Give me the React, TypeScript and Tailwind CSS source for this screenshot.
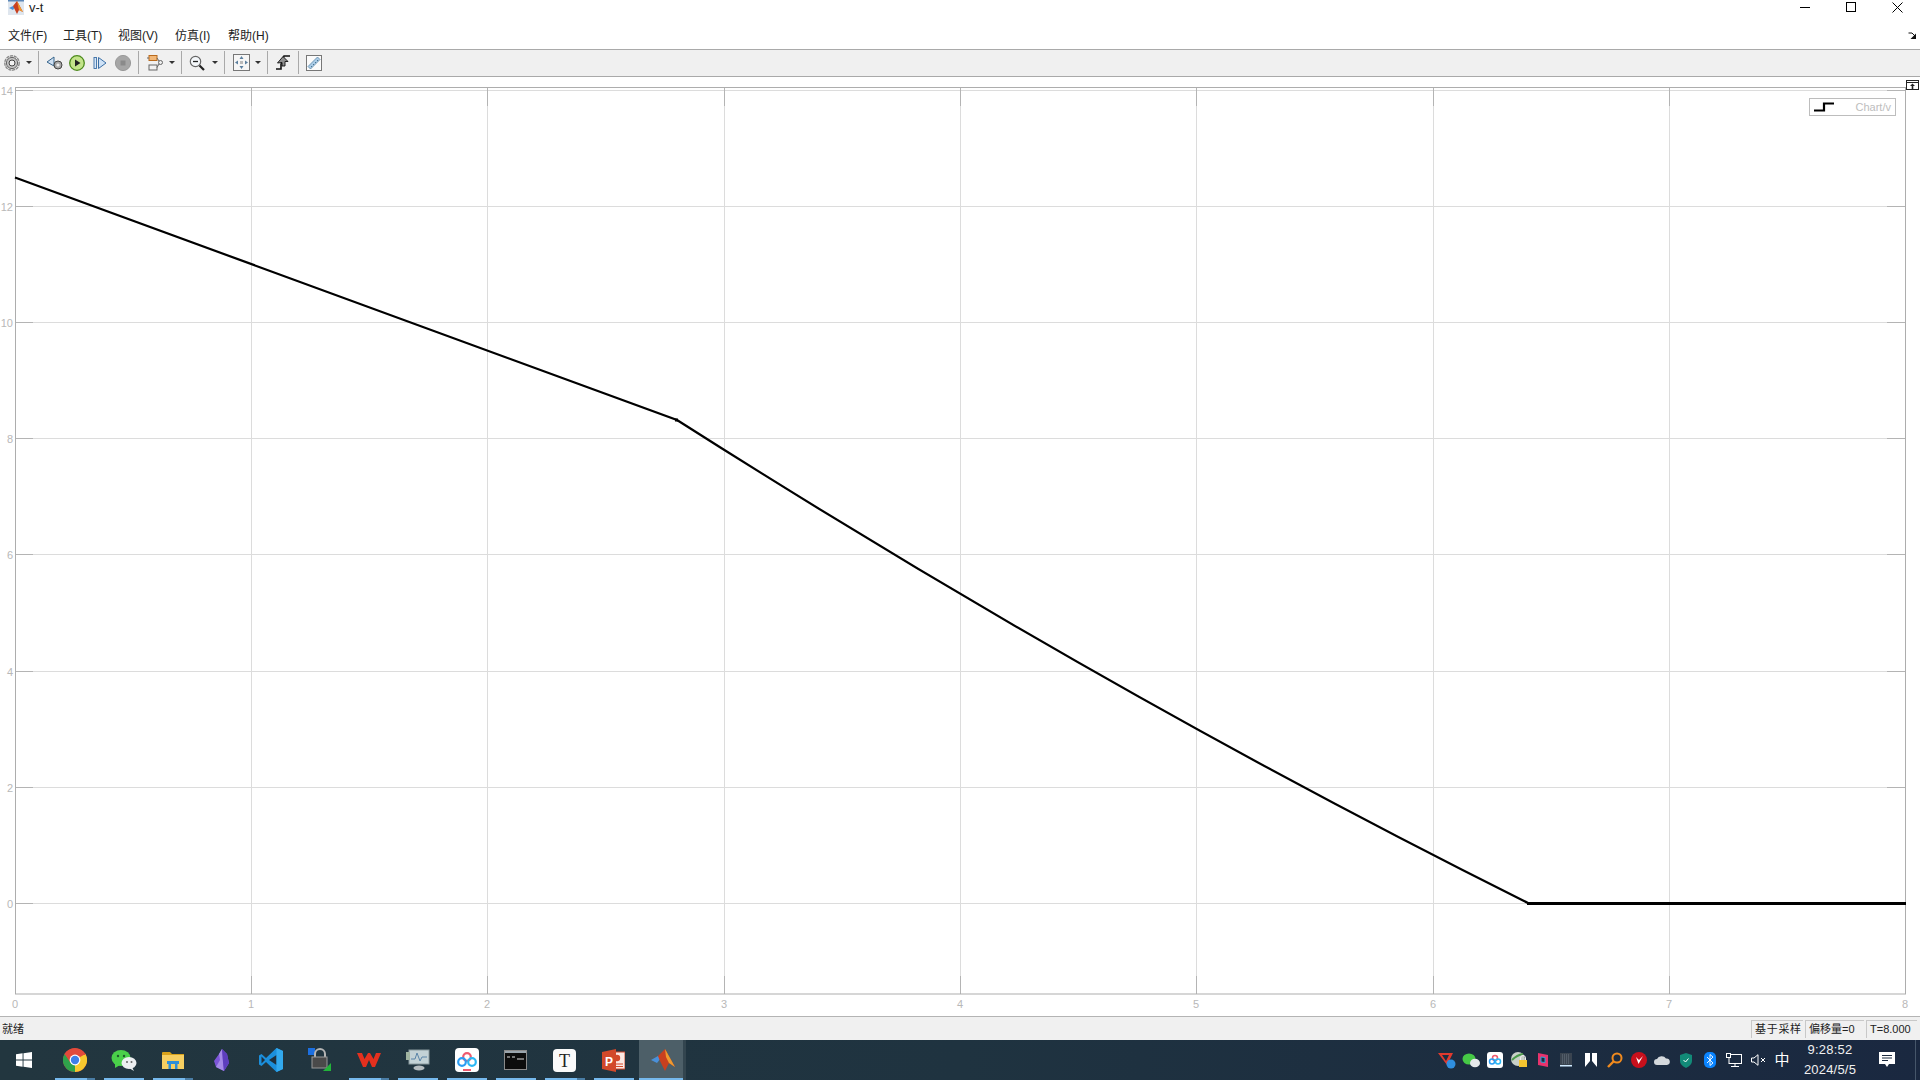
import React from "react";

const FONT = '"Liberation Sans","Noto Sans CJK SC",sans-serif';
const xTicks = [15, 251, 487, 724, 960, 1196, 1433, 1669, 1905];
const yTicks = [903, 787, 671, 554, 438, 322, 206, 90];

function Sep() {
  return <div className="w-px h-[23px] bg-[#a9a9a9]" />;
}
function Caret() {
  return <div className="w-0 h-0 border-l-[3px] border-r-[3px] border-t-[3px] border-l-transparent border-r-transparent border-t-[#333]" />;
}
function Gear({ s = 16 }: { s?: number }) {
  return (
    <svg width={s} height={s} viewBox="0 0 16 16">
      <circle cx="8" cy="8" r="7.2" fill="none" stroke="#8a8a8a" strokeWidth="1.4" strokeDasharray="3.2 0.75" />
      <circle cx="8" cy="8" r="5.6" fill="#c4c4c4" stroke="#666" strokeWidth="1" />
      <circle cx="8" cy="8" r="3" fill="#f2f2f2" stroke="#444" strokeWidth="1" />
    </svg>
  );
}

function Toolbar() {
  return (
    <div className="h-[28px] pb-[1px] bg-[#f0f0f0] border-y border-[#a9a9a9] flex items-center shrink-0">
      <div className="w-[38px] flex items-center pl-[4px] gap-[6px]"><Gear /><Caret /></div>
      <Sep />
      <div className="w-[99px] flex items-center pl-[7px]">
        <svg width="18" height="16" viewBox="0 0 18 16" className="mr-[5px]">
          <path d="M8 2 L1 7 L8 11Z" fill="#cfe0f2" stroke="#36648b" />
          <circle cx="12" cy="10" r="4" fill="#a8a8a8" stroke="#444" />
          <circle cx="12" cy="10" r="1.6" fill="#eee" />
        </svg>
        <svg width="16" height="16" viewBox="0 0 16 16" className="mr-[8px]">
          <circle cx="8" cy="8" r="7.3" fill="#c3e48a" stroke="#4d8a1c" strokeWidth="1.3" />
          <path d="M6 4.5 L11.5 8 L6 11.5Z" fill="#222" />
        </svg>
        <svg width="14" height="14" viewBox="0 0 14 14" className="mr-[8px]">
          <rect x="1" y="1.5" width="2.5" height="11" fill="#d5e6f7" stroke="#3a6ea5" strokeWidth="0.9" />
          <path d="M5.5 1.5 L13 7 L5.5 12.5Z" fill="#cfe2f6" stroke="#3a6ea5" />
        </svg>
        <svg width="16" height="16" viewBox="0 0 16 16">
          <circle cx="8" cy="8" r="7.6" fill="#a6a6a6" stroke="#999" />
          <rect x="5.5" y="5.5" width="5" height="5" fill="#8a8a8a" />
        </svg>
      </div>
      <Sep />
      <div className="w-[42px] flex items-center pl-[8px] gap-[6px]">
        <svg width="16" height="16" viewBox="0 0 16 16">
          <rect x="2" y="0.5" width="8" height="5" fill="#f2b777" stroke="#b86a1e" />
          <rect x="2" y="10" width="8" height="5" fill="#f2f2f2" stroke="#666" />
          <circle cx="13.5" cy="7.5" r="2" fill="#eee" stroke="#666" />
          <path d="M0 3 H2 M10 3 L12 6 M10 12.5 L12 9" stroke="#666" fill="none" />
        </svg>
        <Caret />
      </div>
      <Sep />
      <div className="w-[42px] flex items-center pl-[7px] gap-[7px]">
        <svg width="16" height="16" viewBox="0 0 16 16">
          <circle cx="6.5" cy="6.5" r="5.2" fill="#f4f7fa" stroke="#666" strokeWidth="1.2" />
          <path d="M4 6.5 H9" stroke="#222" strokeWidth="1.3" />
          <path d="M10.5 10.5 L15 15" stroke="#222" strokeWidth="2.2" />
        </svg>
        <Caret />
      </div>
      <Sep />
      <div className="w-[42px] flex items-center pl-[8px] gap-[5px]">
        <svg width="17" height="17" viewBox="0 0 17 17">
          <rect x="0.5" y="0.5" width="16" height="16" fill="#f6f6f6" stroke="#777" />
          <path d="M8.5 2 L6.5 5 H10.5Z M8.5 15 L6.5 12 H10.5Z M2 8.5 L5 6.5 V10.5Z M15 8.5 L12 6.5 V10.5Z" fill="#5b7f9e" />
          <rect x="7" y="7" width="3" height="3" fill="#bbb" />
        </svg>
        <Caret />
      </div>
      <Sep />
      <div className="w-[30px] flex items-center pl-[8px]">
        <svg width="14" height="15" viewBox="0 0 14 15">
          <path d="M0 14 H5 V9 M5 9 L8 1 H14" fill="none" stroke="#111" strokeWidth="1.6" />
          <path d="M1.5 8 L7 1.5 L12 6.5 H9 V11 H6 V7.5Z" fill="#8f8f8f" stroke="#111" strokeWidth="0.9" />
        </svg>
      </div>
      <Sep />
      <div className="pl-[7px] flex items-center">
        <svg width="16" height="16" viewBox="0 0 16 16">
          <rect x="0.5" y="0.5" width="15" height="15" fill="#fbfbfb" stroke="#777" />
          <path d="M2 11.5 L11.5 2 L14 4.5 L4.5 14Z" fill="#a9cbe6" stroke="#5a86a8" strokeWidth="0.8" />
          <path d="M5 11 L6 12 M7 9 L8 10 M9 7 L10 8 M11 5 L12 6" stroke="#35607f" strokeWidth="0.8" />
        </svg>
      </div>
    </div>
  );
}

function Chart() {
  const inner = xTicks.slice(1, 8);
  return (
    <div className="relative h-[939px] bg-white shrink-0">
      <svg width="1920" height="939" viewBox="0 77 1920 939" className="block">
        {inner.map((x) => (
          <line key={x} x1={x + 0.5} x2={x + 0.5} y1="88" y2="994" stroke="#dcdcdc" />
        ))}
        {yTicks.map((y) => (
          <line key={y} x1="15" x2="1905" y1={y + 0.5} y2={y + 0.5} stroke="#dcdcdc" />
        ))}
        {yTicks.map((y) => (
          <g key={y}>
            <line x1="15" x2="33" y1={y + 0.5} y2={y + 0.5} stroke="#b4b4b4" />
            <line x1="1887" x2="1905" y1={y + 0.5} y2={y + 0.5} stroke="#b4b4b4" />
          </g>
        ))}
        {inner.map((x) => (
          <g key={x}>
            <line x1={x + 0.5} x2={x + 0.5} y1="88" y2="106" stroke="#b4b4b4" />
            <line x1={x + 0.5} x2={x + 0.5} y1="976" y2="994" stroke="#b4b4b4" />
          </g>
        ))}
        <rect x="15.5" y="87.5" width="1890" height="906.5" fill="none" stroke="#adadad" />
        <path d="M15 177.5 L677 420 Q1102.5 691 1528 903" fill="none" stroke="#000" strokeWidth="2.2" />
        <path d="M1527 903.5 H1906" fill="none" stroke="#000" strokeWidth="3" />
        <rect x="675" y="418.5" width="3" height="3" fill="#000" />
        {xTicks.map((x, i) => (
          <text key={x} x={x} y="1008" textAnchor="middle" fontSize="11" fill="#b8b8b8" fontFamily={FONT}>
            {i}
          </text>
        ))}
        {yTicks.map((y, i) => (
          <text key={y} x="13" y={y + 4.5} textAnchor="end" fontSize="11" fill="#b8b8b8" fontFamily={FONT}>
            {i * 2}
          </text>
        ))}
      </svg>
      <div className="absolute left-[1809px] top-[21px] w-[87px] h-[18px] border border-[#bdbdbd] bg-white flex items-center justify-between pl-[4px] pr-[4px]">
        <svg width="20" height="10" viewBox="0 0 20 10">
          <path d="M0 8.5 H10 V1.5 H20" fill="none" stroke="#000" strokeWidth="2.2" />
        </svg>
        <span className="text-[11px] text-[#bdbdbd]">Chart/v</span>
      </div>
      <svg width="13" height="10" viewBox="0 0 13 10" className="absolute left-[1906px] top-[3px]">
        <rect x="0.5" y="0.5" width="12" height="9" fill="#fff" stroke="#222" />
        <path d="M1 2.5 H12" stroke="#222" />
        <path d="M6.5 3.5 L9 6 H7.3 V9 H5.7 V6 H4Z" fill="#222" />
      </svg>
    </div>
  );
}

function StatusBar() {
  const cell = "h-[18px] border-t border-l border-[#c8c8c8] flex items-center text-[#222] pl-[3px] text-[11px]";
  return (
    <div className="h-[24px] pt-[1px] bg-[#f0f0f0] border-t border-[#b4b4b4] flex items-center shrink-0">
      <span className="text-[11px] text-[#222] pl-[2px] flex-1">就绪</span>
      <div className="flex gap-[2px] pr-[3px]">
        <div className={`${cell} w-[52px] tracking-[0.7px]`}>基于采样</div>
        <div className={`${cell} w-[59px]`}>偏移量=0</div>
        <div className={`${cell} w-[51px]`}>T=8.000</div>
      </div>
    </div>
  );
}

const taskIcons: React.ReactNode[] = [
  <svg key="chrome" width="24" height="24" viewBox="0 0 24 24">
    <circle cx="12" cy="12" r="12" fill="#e24a3b" />
    <path d="M12 12 L1.6 6 A12 12 0 0 0 12 24 Z" fill="#2fa24b" />
    <path d="M12 12 L12 24 A12 12 0 0 0 22.4 6 Z" fill="#f8c92e" />
    <path d="M12 7 H22.4 A12 12 0 0 0 1.6 6 L7 14 Z" fill="#e24a3b" />
    <circle cx="12" cy="12" r="5.4" fill="#fff" />
    <circle cx="12" cy="12" r="4.2" fill="#3f7fe8" />
  </svg>,
  <svg key="wechat" width="26" height="22" viewBox="0 0 26 22">
    <ellipse cx="10" cy="9" rx="9.5" ry="8" fill="#4ad04a" />
    <path d="M4 14 L4 19 L9 16Z" fill="#4ad04a" />
    <circle cx="7" cy="7" r="1.2" fill="#1d5c2b" />
    <circle cx="13" cy="7" r="1.2" fill="#1d5c2b" />
    <ellipse cx="18" cy="14" rx="7.5" ry="6" fill="#eceff1" />
    <path d="M21 18 L23 22 L18 19Z" fill="#eceff1" />
    <circle cx="16" cy="13" r="1" fill="#666" />
    <circle cx="20.5" cy="13" r="1" fill="#666" />
  </svg>,
  <svg key="files" width="22" height="18" viewBox="0 0 22 18">
    <path d="M0 2 A1 1 0 0 1 1 1 H8 L10 3 H22 V18 H0Z" fill="#d9a21b" />
    <rect x="0" y="4" width="22" height="14" fill="#f7cf61" />
    <rect x="5" y="10" width="12" height="3" fill="#2f8fd8" />
    <rect x="6.5" y="13" width="2.5" height="5" fill="#2f8fd8" />
    <rect x="13" y="13" width="2.5" height="5" fill="#2f8fd8" />
  </svg>,
  <svg key="obsidian" width="16" height="22" viewBox="0 0 16 22">
    <path d="M8 0 L13 5 L15 14 L10 22 L2 18 L0 12 L5 5Z" fill="#7c55d8" />
    <path d="M8 0 L5 5 L6 11 L2 18 L10 22 L9 13Z" fill="#a48ae8" />
    <path d="M8 0 L13 5 L15 14 L10 22 L9 13Z" fill="#5d3ebd" />
  </svg>,
  <svg key="vscode" width="24" height="24" viewBox="0 0 24 24">
    <path d="M17.5 0 L24 3 V21 L17.5 24 L7 14 L2.5 18 L0 16.5 V7.5 L2.5 6 L7 10Z" fill="#1b8fdc" />
    <path d="M17.5 7 L10 12 L17.5 17Z" fill="#1e2f3c" />
    <path d="M17.5 0 L24 3 V21 L17.5 24Z" fill="#32a9ee" />
    <path d="M2.5 8.5 V15.5 L6 12Z" fill="#1e2f3c" />
  </svg>,
  <svg key="lock" width="24" height="24" viewBox="0 0 24 24">
    <rect x="0" y="0" width="7" height="7" fill="#1c6fe0" />
    <path d="M7 9 V6 A5 5 0 0 1 17 6 V9" fill="none" stroke="#b5b5b5" strokeWidth="2" />
    <rect x="4" y="9" width="15" height="11" fill="#4a4a4a" stroke="#999" />
    <path d="M15 23 L23 15 V23Z" fill="#22b33a" />
  </svg>,
  <svg key="wps" width="24" height="18" viewBox="0 0 24 18">
    <path d="M0 2 L6 16 H9 L12 9 L15 16 H18 L24 2 H19 L16.5 8 L13 2 H11 L7.5 8 L5 2Z" fill="#e5301e" />
  </svg>,
  <svg key="mon" width="24" height="22" viewBox="0 0 24 22">
    <rect x="3" y="1" width="20" height="14" fill="#c3d2d6" stroke="#8a9a9e" />
    <path d="M5 10 H9 L11 4 L14 12 L16 8 H21" fill="none" stroke="#5a84a8" />
    <rect x="0" y="3" width="4" height="8" fill="#9fb3a0" />
    <ellipse cx="13" cy="19" rx="5.5" ry="2.6" fill="#b5bcbf" />
  </svg>,
  <svg key="baidu" width="24" height="24" viewBox="0 0 24 24">
    <rect width="24" height="24" rx="4" fill="#fff" />
    <circle cx="12" cy="9" r="3.8" fill="none" stroke="#ee5a6f" strokeWidth="2.2" />
    <circle cx="7" cy="14" r="3.8" fill="none" stroke="#2b9df4" strokeWidth="2.2" />
    <circle cx="17" cy="14" r="3.8" fill="none" stroke="#2bb7f4" strokeWidth="2.2" />
    <rect x="8" y="21" width="8" height="2" fill="#ee5a6f" />
  </svg>,
  <svg key="term" width="23" height="20" viewBox="0 0 23 20">
    <rect x="0.5" y="0.5" width="22" height="19" fill="#0c0c0c" stroke="#8a8a8a" />
    <rect x="1" y="1" width="21" height="2" fill="#9aa5ad" />
    <path d="M3 7 H6 M8 7 H11 M13 9 H20" stroke="#ddd" strokeWidth="1.2" />
  </svg>,
  <svg key="typora" width="23" height="23" viewBox="0 0 23 23">
    <rect width="23" height="23" rx="4" fill="#fafafa" />
    <text x="11.5" y="17.5" textAnchor="middle" fontSize="18" fontFamily='"Liberation Serif",serif' fill="#222">T</text>
  </svg>,
  <svg key="ppt" width="23" height="23" viewBox="0 0 23 23">
    <rect x="9" y="3" width="14" height="17" fill="#fbe9e4" stroke="#d2492a" />
    <circle cx="15" cy="9" r="3.2" fill="#d2492a" />
    <path d="M12 15 H21 M12 17.5 H21" stroke="#d2492a" />
    <path d="M0 3 L14 0 V23 L0 20Z" fill="#d2492a" />
    <text x="7" y="16.5" textAnchor="middle" fontSize="12" fontWeight="bold" fontFamily={FONT} fill="#fff">P</text>
  </svg>,
  <svg key="matlab" width="24" height="22" viewBox="0 0 24 22">
    <path d="M0 11 L7 7 L10 9 L6 14Z" fill="#4a90d9" />
    <path d="M7 7 L14 0 L24 18 L18 14 L14 22 L9 12Z" fill="#c8401f" />
    <path d="M14 0 L24 18 L18 14 L15 8Z" fill="#ef9a2f" />
  </svg>,
];

const bars: ({ multi: boolean } | null)[] = [
  { multi: true },
  { multi: false },
  { multi: true },
  null,
  null,
  null,
  { multi: true },
  { multi: false },
  { multi: false },
  { multi: false },
  { multi: true },
  { multi: false },
  { multi: false },
];

function TrayIcons() {
  return (
    <div className="flex items-center">
      {[
        <svg key="a" width="18" height="18" viewBox="0 0 18 18"><path d="M0 2 H15 L9 14Z M4 4 L8 10 L11 4Z" fill="#e23a2e" fillRule="evenodd" /><circle cx="13" cy="13" r="4.5" fill="#2f8fe0" /></svg>,
        <svg key="b" width="18" height="15" viewBox="0 0 18 15"><ellipse cx="7" cy="6" rx="6.5" ry="5.5" fill="#46c946" /><ellipse cx="13" cy="10" rx="5" ry="4.3" fill="#e5e8ea" /></svg>,
        <svg key="c" width="16" height="16" viewBox="0 0 16 16"><rect width="16" height="16" rx="3" fill="#fff" /><circle cx="8" cy="6" r="2.5" fill="none" stroke="#ee5a6f" strokeWidth="1.5" /><circle cx="5" cy="9.5" r="2.5" fill="none" stroke="#2b9df4" strokeWidth="1.5" /><circle cx="11" cy="9.5" r="2.5" fill="none" stroke="#2bb7f4" strokeWidth="1.5" /></svg>,
        <svg key="d" width="16" height="16" viewBox="0 0 16 16"><circle cx="7" cy="7" r="7" fill="#c8d0c8" /><path d="M1 8 Q6 3 12 2" stroke="#4a9a4a" strokeWidth="2" fill="none" /><rect x="8" y="8" width="8" height="7" fill="#f4c430" /><path d="M9.5 8 V6 A2.5 2.5 0 0 1 14.5 6 V8" fill="none" stroke="#eee" /></svg>,
        <svg key="e" width="12" height="16" viewBox="0 0 12 16"><path d="M1 1 L11 3 V15 L1 13Z" fill="#e8336d" /><path d="M4 5 L8 5.5 V10.5 L4 10Z" fill="#1b2a3f" stroke="#2aa6d8" /></svg>,
        <svg key="f" width="13" height="14" viewBox="0 0 13 14"><rect width="12" height="12" fill="#3a4450" /><rect x="0" y="12" width="12" height="1.5" fill="#cfeaff" /><path d="M2 2 H10 M2 4 H10 M2 6 H10 M2 8 H10 M2 10 H10" stroke="#6b7682" strokeDasharray="1 1" /></svg>,
        <svg key="g" width="12" height="15" viewBox="0 0 12 15"><path d="M0 0 H5 V8 L0 14Z M7 0 H12 V14 L7 8Z" fill="#fff" /></svg>,
        <svg key="h" width="16" height="16" viewBox="0 0 16 16"><circle cx="10" cy="6" r="4.5" fill="none" stroke="#f08a1e" strokeWidth="2" /><path d="M6.5 9.5 L1 15" stroke="#f08a1e" strokeWidth="2.4" /></svg>,
        <svg key="i" width="16" height="16" viewBox="0 0 16 16"><circle cx="8" cy="8" r="8" fill="#c8101c" /><path d="M5 5 L7.5 12 L12 4 L8 8Z" fill="#fff" /></svg>,
        <svg key="j" width="16" height="10" viewBox="0 0 16 10"><path d="M3 10 A3 3 0 0 1 3 4 A5 4.5 0 0 1 12 3.5 A3.2 3.2 0 0 1 13 10Z" fill="#d4d8dc" /></svg>,
        <svg key="k" width="12" height="15" viewBox="0 0 12 15"><path d="M6 0 L12 2 V8 Q12 12 6 15 Q0 12 0 8 V2Z" fill="#128a78" /><path d="M3.5 7 L5.5 9 L8.5 5.5" stroke="#fff" fill="none" /></svg>,
        <svg key="l" width="12" height="16" viewBox="0 0 12 16"><rect width="12" height="16" rx="5" fill="#0a84ff" /><path d="M3 5 L9 11 L6 13.5 V2.5 L9 5 L3 11" fill="none" stroke="#fff" strokeWidth="0.9" /></svg>,
        <svg key="m" width="16" height="14" viewBox="0 0 16 14"><rect x="3" y="1.5" width="12.5" height="9" fill="none" stroke="#fff" /><rect x="0.5" y="0.5" width="4" height="4" fill="#1b2a3f" stroke="#fff" /><path d="M9 11 V13 M5 13.5 H13" stroke="#fff" /></svg>,
        <svg key="n" width="15" height="12" viewBox="0 0 15 12"><path d="M0.5 4 H3 L7 0.7 V11.3 L3 8 H0.5Z" fill="none" stroke="#fff" /><path d="M10 4 L14 8 M14 4 L10 8" stroke="#fff" /></svg>,
      ].map((icon, i) => (
        <div key={i} className="w-[23.9px] flex items-center justify-center">{icon}</div>
      ))}
    </div>
  );
}

function Taskbar() {
  return (
    <div className="h-[40px] bg-gradient-to-r from-[#22363f] via-[#1f3340] to-[#1a2840] flex items-stretch shrink-0">
      <div className="w-[50px] flex items-center justify-center">
        <svg width="16" height="16" viewBox="0 0 16 16" className="mr-[2px]">
          <path d="M0 2.3 L6.6 1.3 V7.6 H0Z M7.5 1.2 L16 0 V7.6 H7.5Z M0 8.4 H6.6 V14.7 L0 13.7Z M7.5 8.4 H16 V16 L7.5 14.8Z" fill="#fff" />
        </svg>
      </div>
      <div className="flex">
        {taskIcons.map((icon, i) => {
          const b = bars[i];
          const active = i === 12;
          return (
            <div
              key={i}
              className={
                active
                  ? "w-[47px] ml-[1px] pl-[4px] relative flex items-center justify-center bg-[#4d5f68] border-r-[3px] border-[#33454f]"
                  : "w-[49px] relative flex items-center justify-center"
              }
            >
              {icon}
              {b && !active && (
                <div className="absolute left-[5px] bottom-0 h-[2px] w-[40px] bg-[#76b9ed] flex justify-end">
                  {b.multi && <div className="w-[8px] h-[2px] bg-[#4a7da5]" />}
                </div>
              )}
              {active && <div className="absolute left-0 bottom-0 h-[2px] w-full bg-[#76b9ed]" />}
            </div>
          );
        })}
      </div>
      <div className="flex-1" />
      <div className="flex items-center">
        <TrayIcons />
        <span className="w-[24px] text-center text-[15px] text-white">中</span>
        <div className="w-[72px] text-center text-[13px] leading-[20px] text-[#f0f0f0] tracking-[0.2px]">
          <div>9:28:52</div>
          <div>2024/5/5</div>
        </div>
        <div className="w-[36px] ml-[3px] mr-[10px] flex items-center justify-center">
          <svg width="16" height="17" viewBox="0 0 16 17">
            <path d="M0 0 H16 V12 H10 L8 15 L6 12 H0Z" fill="#fff" />
            <path d="M3 3.5 H13 M3 6 H13 M3 8.5 H9" stroke="#1b2a3f" />
          </svg>
        </div>
        <div className="w-px h-full bg-[#46566a] mr-[4px]" />
      </div>
    </div>
  );
}

export default function App() {
  return (
    <div className="w-[1920px] h-[1080px] flex flex-col overflow-hidden bg-white text-black" style={{ fontFamily: FONT }}>
      <div className="h-[25px] bg-white flex items-start shrink-0 relative">
        <svg width="16" height="15" viewBox="0 0 16 15" className="ml-[8px] mt-0">
          <rect width="16" height="15" fill="#dfe6ee" />
          <rect width="16" height="1.5" fill="#5b87b8" />
          <path d="M1 8 L5 6 L7 7 L5 10Z" fill="#4a90d9" />
          <path d="M5 6 L9 1 L15 12 L11 10 L9 14 L6 8Z" fill="#c8401f" />
          <path d="M9 1 L15 12 L11 10Z" fill="#ef9a2f" />
        </svg>
        <span className="ml-[5px] text-[13px] leading-[16px] text-[#222]">v-t</span>
        <div className="ml-auto flex items-start">
          <div className="w-[46px] h-[14px] flex items-center justify-center">
            <div className="w-[10px] h-px bg-black" />
          </div>
          <div className="w-[46px] h-[14px] flex items-center justify-center">
            <div className="w-[10px] h-[10px] border border-black" />
          </div>
          <div className="w-[46px] h-[14px] flex items-center justify-center">
            <svg width="11" height="11" viewBox="0 0 11 11"><path d="M0.5 0.5 L10.5 10.5 M10.5 0.5 L0.5 10.5" stroke="#000" /></svg>
          </div>
        </div>
      </div>
      <div className="h-[24px] pb-[2px] bg-white flex items-center shrink-0 text-[12px] text-[#222] relative">
        <span className="ml-[8px] w-[55px]">文件(F)</span>
        <span className="w-[55px]">工具(T)</span>
        <span className="w-[57px]">视图(V)</span>
        <span className="w-[53px]">仿真(I)</span>
        <span>帮助(H)</span>
        <svg width="9" height="8" viewBox="0 0 9 8" className="absolute right-[3px] top-[7px]">
          <path d="M0.5 1 H4 L7 4" fill="none" stroke="#111" />
          <path d="M8 1.5 V7 H2.5Z" fill="#111" />
        </svg>
      </div>
      <Toolbar />
      <Chart />
      <StatusBar />
      <Taskbar />
    </div>
  );
}
